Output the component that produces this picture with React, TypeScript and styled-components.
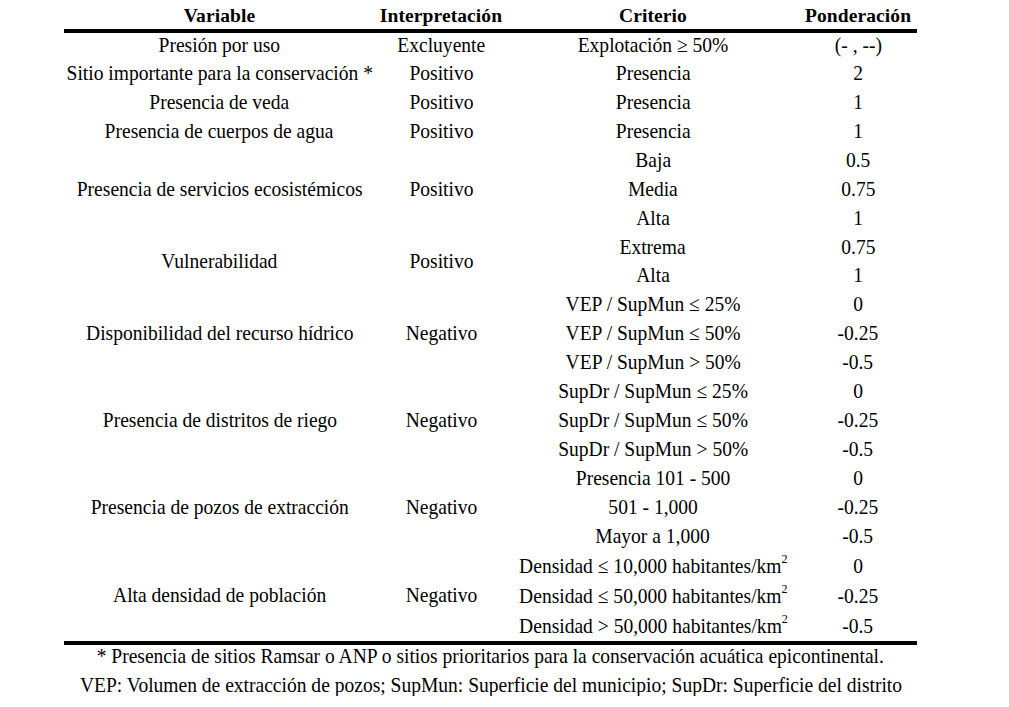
import styled, { createGlobalStyle } from "styled-components";

const serif = `"Liberation Serif", "Times New Roman", "DejaVu Serif", serif`;

const GlobalStyle = createGlobalStyle`
  html, body {
    margin: 0;
    padding: 0;
    background: #ffffff;
  }

  body {
    font-family: ${serif};
    color: #000000;
  }
`;

const Page = styled.main`
  padding-left: 64px;
  width: 853px;
  font-family: ${serif};
`;

const Table = styled.table`
  width: 853px;
  border-collapse: collapse;
  table-layout: fixed;
  font-family: ${serif};
  font-size: 21px;
  color: #000000;
`;

const HeadRow = styled.tr`
  height: 31px;
`;

const HeadCell = styled.th<{ $width: number }>`
  width: ${(p) => p.$width}px;
  padding: 2px 0 0;
  font-weight: bold;
  font-size: 19.5px;
  line-height: 27px;
  text-align: center;
  letter-spacing: 0.1px;
  vertical-align: top;
  border-bottom: 4px solid #000;
`;

const Body = styled.tbody`
  border-bottom: 4px solid #000;
`;

const Row = styled.tr<{ $tall?: boolean }>`
  height: ${(p) => (p.$tall ? "30.4px" : "28.94px")};

  > td {
    padding-bottom: ${(p) => (p.$tall ? "2px" : "3px")};
  }
`;

const Cell = styled.td`
  padding: 0;
  line-height: 22px;
  text-align: center;
  vertical-align: middle;
  white-space: nowrap;
`;

const Text = styled.span`
  display: inline-block;
  margin: 0 -30px;
  transform: scaleX(0.93);
  transform-origin: center;

  sup {
    font-size: 13px;
    line-height: 0;
    vertical-align: 10px;
  }
`;

const Notes = styled.div`
  display: flex;
  flex-direction: column;
  align-items: center;
  gap: 7px;
  font-family: ${serif};
  font-size: 21px;
  line-height: 22px;
  white-space: nowrap;
`;

type Group = {
  variable: string;
  interp: string;
  items: { criterio: React.ReactNode; peso: string }[];
  tall?: boolean;
};

const km2 = (sign: string, value: string) => (
  <>
    Densidad {sign} {value} habitantes/km<sup>2</sup>
  </>
);

const groups: Group[] = [
  {
    variable: "Presión por uso",
    interp: "Excluyente",
    items: [{ criterio: "Explotación ≥ 50%", peso: "(- , --)" }],
  },
  {
    variable: "Sitio importante para la conservación *",
    interp: "Positivo",
    items: [{ criterio: "Presencia", peso: "2" }],
  },
  {
    variable: "Presencia de veda",
    interp: "Positivo",
    items: [{ criterio: "Presencia", peso: "1" }],
  },
  {
    variable: "Presencia de cuerpos de agua",
    interp: "Positivo",
    items: [{ criterio: "Presencia", peso: "1" }],
  },
  {
    variable: "Presencia de servicios ecosistémicos",
    interp: "Positivo",
    items: [
      { criterio: "Baja", peso: "0.5" },
      { criterio: "Media", peso: "0.75" },
      { criterio: "Alta", peso: "1" },
    ],
  },
  {
    variable: "Vulnerabilidad",
    interp: "Positivo",
    items: [
      { criterio: "Extrema", peso: "0.75" },
      { criterio: "Alta", peso: "1" },
    ],
  },
  {
    variable: "Disponibilidad del recurso hídrico",
    interp: "Negativo",
    items: [
      { criterio: "VEP / SupMun ≤ 25%", peso: "0" },
      { criterio: "VEP / SupMun ≤ 50%", peso: "-0.25" },
      { criterio: "VEP / SupMun > 50%", peso: "-0.5" },
    ],
  },
  {
    variable: "Presencia de distritos de riego",
    interp: "Negativo",
    items: [
      { criterio: "SupDr / SupMun ≤ 25%", peso: "0" },
      { criterio: "SupDr / SupMun ≤ 50%", peso: "-0.25" },
      { criterio: "SupDr / SupMun > 50%", peso: "-0.5" },
    ],
  },
  {
    variable: "Presencia de pozos de extracción",
    interp: "Negativo",
    items: [
      { criterio: "Presencia 101 - 500", peso: "0" },
      { criterio: "501 - 1,000", peso: "-0.25" },
      { criterio: "Mayor a 1,000", peso: "-0.5" },
    ],
  },
  {
    variable: "Alta densidad de población",
    interp: "Negativo",
    tall: true,
    items: [
      { criterio: km2("≤", "10,000"), peso: "0" },
      { criterio: km2("≤", "50,000"), peso: "-0.25" },
      { criterio: km2(">", "50,000"), peso: "-0.5" },
    ],
  },
];

const App = () => {
  return (
    <Page>
      <GlobalStyle />
      <Table>
        <thead>
          <HeadRow>
            <HeadCell $width={311}>Variable</HeadCell>
            <HeadCell $width={132}>Interpretación</HeadCell>
            <HeadCell $width={292}>Criterio</HeadCell>
            <HeadCell $width={118}>Ponderación</HeadCell>
          </HeadRow>
        </thead>
        <Body>
          {groups.map((g, gi) =>
            g.items.map((item, idx) => (
              <Row key={`${gi}-${idx}`} $tall={g.tall}>
                {idx === 0 && (
                  <>
                    <Cell rowSpan={g.items.length}>
                      <Text>{g.variable}</Text>
                    </Cell>
                    <Cell rowSpan={g.items.length}>
                      <Text>{g.interp}</Text>
                    </Cell>
                  </>
                )}
                <Cell>
                  <Text>{item.criterio}</Text>
                </Cell>
                <Cell>
                  <Text>{item.peso}</Text>
                </Cell>
              </Row>
            ))
          )}
        </Body>
      </Table>
      <Notes>
        <Text>
          * Presencia de sitios Ramsar o ANP o sitios prioritarios para la
          conservación acuática epicontinental.
        </Text>
        <Text>
          VEP: Volumen de extracción de pozos; SupMun: Superficie del
          municipio; SupDr: Superficie del distrito
        </Text>
      </Notes>
    </Page>
  );
};

export default App;
